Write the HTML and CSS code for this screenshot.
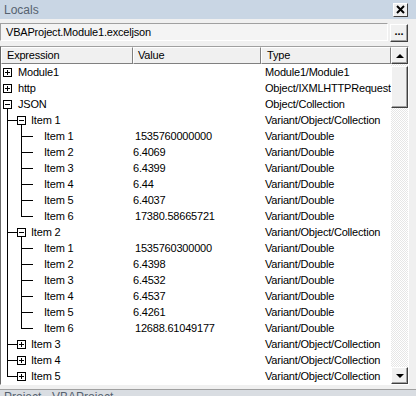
FILE: index.html
```html
<!DOCTYPE html>
<html>
<head>
    <meta charset="UTF-8">
    <title>Locals</title>
    <link rel="stylesheet" href="styles.css">
</head>
<body>
    <div class="window">
        <div class="titlebar">
            <span class="title">Locals</span>
            <span class="close">
                <svg width="9" height="9" viewBox="0 0 9 9"><path d="M1 1L8 8M8 1L1 8" stroke="#000" stroke-width="2"/></svg>
            </span>
        </div>

        <div class="context">
            <div class="combo">VBAProject.Module1.exceljson</div>
            <div class="btn dots">...</div>
        </div>

        <div class="listbox">
            <div class="grid">
                <div class="header">
                    <div class="hcell c-expr">Expression</div>
                    <div class="hcell c-val">Value</div>
                    <div class="hcell c-type">Type</div>
                </div>

                <!-- nivel 0 -->
                <div class="row">
                    <div class="c-expr"><span class="knot root"><span class="box plus"></span></span><span class="name root-name">Module1</span></div>
                    <div class="c-val"></div>
                    <div class="c-type">Module1/Module1</div>
                </div>
                <div class="row">
                    <div class="c-expr"><span class="knot root"><span class="box plus"></span></span><span class="name root-name">http</span></div>
                    <div class="c-val"></div>
                    <div class="c-type">Object/IXMLHTTPRequest</div>
                </div>
                <div class="row">
                    <div class="c-expr"><span class="knot root open"><span class="box minus"></span></span><span class="name root-name">JSON</span></div>
                    <div class="c-val"></div>
                    <div class="c-type">Object/Collection</div>
                </div>

                <!-- Item 1 -->
                <div class="row">
                    <div class="c-expr"><span class="ln-tee"></span><span class="knot open"><span class="box minus"></span></span><span class="name l1-name">Item 1</span></div>
                    <div class="c-val"></div>
                    <div class="c-type">Variant/Object/Collection</div>
                </div>
                <div class="row">
                    <div class="c-expr"><span class="ln-l2"></span><span class="name l2-name">Item 1</span></div>
                    <div class="c-val wide">1535760000000</div>
                    <div class="c-type">Variant/Double</div>
                </div>
                <div class="row">
                    <div class="c-expr"><span class="ln-l2"></span><span class="name l2-name">Item 2</span></div>
                    <div class="c-val">6.4069</div>
                    <div class="c-type">Variant/Double</div>
                </div>
                <div class="row">
                    <div class="c-expr"><span class="ln-l2"></span><span class="name l2-name">Item 3</span></div>
                    <div class="c-val">6.4399</div>
                    <div class="c-type">Variant/Double</div>
                </div>
                <div class="row">
                    <div class="c-expr"><span class="ln-l2"></span><span class="name l2-name">Item 4</span></div>
                    <div class="c-val">6.44</div>
                    <div class="c-type">Variant/Double</div>
                </div>
                <div class="row">
                    <div class="c-expr"><span class="ln-l2"></span><span class="name l2-name">Item 5</span></div>
                    <div class="c-val">6.4037</div>
                    <div class="c-type">Variant/Double</div>
                </div>
                <div class="row">
                    <div class="c-expr"><span class="ln-l2 last"></span><span class="name l2-name">Item 6</span></div>
                    <div class="c-val wide">17380.58665721</div>
                    <div class="c-type">Variant/Double</div>
                </div>

                <!-- Item 2 -->
                <div class="row">
                    <div class="c-expr"><span class="ln-tee"></span><span class="knot open"><span class="box minus"></span></span><span class="name l1-name">Item 2</span></div>
                    <div class="c-val"></div>
                    <div class="c-type">Variant/Object/Collection</div>
                </div>
                <div class="row">
                    <div class="c-expr"><span class="ln-l2"></span><span class="name l2-name">Item 1</span></div>
                    <div class="c-val wide">1535760300000</div>
                    <div class="c-type">Variant/Double</div>
                </div>
                <div class="row">
                    <div class="c-expr"><span class="ln-l2"></span><span class="name l2-name">Item 2</span></div>
                    <div class="c-val">6.4398</div>
                    <div class="c-type">Variant/Double</div>
                </div>
                <div class="row">
                    <div class="c-expr"><span class="ln-l2"></span><span class="name l2-name">Item 3</span></div>
                    <div class="c-val">6.4532</div>
                    <div class="c-type">Variant/Double</div>
                </div>
                <div class="row">
                    <div class="c-expr"><span class="ln-l2"></span><span class="name l2-name">Item 4</span></div>
                    <div class="c-val">6.4537</div>
                    <div class="c-type">Variant/Double</div>
                </div>
                <div class="row">
                    <div class="c-expr"><span class="ln-l2"></span><span class="name l2-name">Item 5</span></div>
                    <div class="c-val">6.4261</div>
                    <div class="c-type">Variant/Double</div>
                </div>
                <div class="row">
                    <div class="c-expr"><span class="ln-l2 last"></span><span class="name l2-name">Item 6</span></div>
                    <div class="c-val wide">12688.61049177</div>
                    <div class="c-type">Variant/Double</div>
                </div>

                <!-- Item 3..5 cerrados -->
                <div class="row">
                    <div class="c-expr"><span class="ln-tee"></span><span class="knot"><span class="box plus"></span></span><span class="name l1-name">Item 3</span></div>
                    <div class="c-val"></div>
                    <div class="c-type">Variant/Object/Collection</div>
                </div>
                <div class="row">
                    <div class="c-expr"><span class="ln-tee"></span><span class="knot"><span class="box plus"></span></span><span class="name l1-name">Item 4</span></div>
                    <div class="c-val"></div>
                    <div class="c-type">Variant/Object/Collection</div>
                </div>
                <div class="row">
                    <div class="c-expr"><span class="ln-tee"></span><span class="knot"><span class="box plus"></span></span><span class="name l1-name">Item 5</span></div>
                    <div class="c-val"></div>
                    <div class="c-type">Variant/Object/Collection</div>
                </div>
            </div>

            <div class="vscroll">
                <div class="btn arrow"><span class="tri up"></span></div>
                <div class="gap"></div>
                <div class="btn thumb"></div>
                <div class="track"></div>
                <div class="btn arrow"><span class="tri down"></span></div>
            </div>
        </div>

        <div class="next-panel">
            <span class="next-title">Project - VBAProject</span>
        </div>
    </div>
</body>
</html>
```

FILE: styles.css
```css
body {
    margin: 0;
    padding: 0;
    font-family: "Liberation Sans", Arial, sans-serif;
    font-size: 11px;
    letter-spacing: -0.2px;
    color: #000;
    background-color: #f0f0f0;
}

.window {
    width: 416px;
    height: 396px;
    overflow: hidden;
    background-color: #f0f0f0;
    display: flex;
    flex-direction: column;
}

/* Barra de titulo */
.titlebar {
    height: 19px;
    background-color: #c9d6e4;
    display: flex;
    align-items: center;
    justify-content: space-between;
    padding: 0 8px 0 4px;
    flex-shrink: 0;
}

.title {
    font-size: 12px;
    letter-spacing: 0;
    color: #56626f;
}

.close {
    width: 15px;
    height: 14px;
    box-sizing: border-box;
    background-color: #f0f0f0;
    border: 1px solid;
    border-color: #fff #404040 #404040 #fff;
    display: flex;
    align-items: center;
    justify-content: center;
}

.close svg {
    display: block;
}

/* Combo de contexto */
.context {
    display: flex;
    align-items: flex-start;
    margin-top: 4px;
    height: 19px;
    flex-shrink: 0;
}

.combo {
    width: 388px;
    height: 18px;
    box-sizing: border-box;
    border: 1px solid;
    border-color: #a0a0a0 #fff #fff #a0a0a0;
    background-color: #f4f4f4;
    padding: 0 5px;
    line-height: 16px;
    font-size: 11px;
}

.btn {
    box-sizing: border-box;
    background-color: #f0f0f0;
    border: 1px solid;
    border-color: #fff #404040 #404040 #fff;
    box-shadow: inset -1px -1px 0 #a0a0a0;
}

.dots {
    width: 18px;
    height: 18px;
    margin-left: 2px;
    margin-top: 1px;
    text-align: center;
    line-height: 12px;
    font-weight: bold;
    letter-spacing: 0;
}

/* Lista */
.listbox {
    margin-top: 4px;
    width: 409px;
    height: 339px;
    box-sizing: border-box;
    border: 1px solid;
    border-color: #a0a0a0 #fff #fff #696969;
    background-color: #fff;
    display: flex;
    flex-shrink: 0;
}

.grid {
    flex: 1;
    overflow: hidden;
}

.header {
    display: flex;
    height: 17px;
    box-sizing: border-box;
    background-color: #f0f0f0;
}

.hcell {
    box-sizing: border-box;
    height: 17px;
    line-height: 15px;
    border: 1px solid;
    border-color: #fff #808080 #808080 #fff;
    padding-left: 5px;
}

.row {
    display: flex;
    height: 16px;
    line-height: 16px;
    white-space: nowrap;
}

.c-expr {
    width: 132px;
    display: flex;
    align-items: center;
    flex-shrink: 0;
}

.c-val {
    width: 128px;
    flex-shrink: 0;
    padding-left: 0;
    box-sizing: border-box;
}

.row .c-val {
    padding-left: 0;
}

.row .c-val.wide {
    padding-left: 2px;
}

.c-type {
    flex: 1;
}

.row .c-type {
    padding-left: 4px;
}

.hcell.c-val {
    padding-left: 4px;
}

.hcell.c-type {
    padding-left: 5px;
}

/* Arbol */
.knot {
    width: 9px;
    height: 16px;
    display: flex;
    align-items: center;
    flex-shrink: 0;
}

.knot.root {
    margin-left: 2px;
}

.knot.open {
    background: linear-gradient(#000, #000) 4px 12px / 1px 4px no-repeat;
}

.box {
    width: 9px;
    height: 9px;
    box-sizing: border-box;
    border: 1px solid #000;
}

.box.plus {
    background:
        linear-gradient(#000, #000) center / 5px 1px no-repeat,
        linear-gradient(#000, #000) center / 1px 5px no-repeat,
        #fff;
}

.box.minus {
    background:
        linear-gradient(#000, #000) center / 5px 1px no-repeat,
        #fff;
}

.ln-tee {
    width: 16px;
    height: 16px;
    flex-shrink: 0;
    background:
        linear-gradient(#000, #000) 6px 0 / 1px 16px no-repeat,
        linear-gradient(#000, #000) 6px 8px / 10px 1px no-repeat;
}

.row:last-child .ln-tee {
    background:
        linear-gradient(#000, #000) 6px 0 / 1px 9px no-repeat,
        linear-gradient(#000, #000) 6px 8px / 10px 1px no-repeat;
}

.ln-l2 {
    width: 33px;
    height: 16px;
    flex-shrink: 0;
    background:
        linear-gradient(#000, #000) 6px 0 / 1px 16px no-repeat,
        linear-gradient(#000, #000) 20px 0 / 1px 16px no-repeat,
        linear-gradient(#000, #000) 20px 8px / 12px 1px no-repeat;
}

.ln-l2.last {
    background:
        linear-gradient(#000, #000) 6px 0 / 1px 16px no-repeat,
        linear-gradient(#000, #000) 20px 0 / 1px 9px no-repeat,
        linear-gradient(#000, #000) 20px 8px / 12px 1px no-repeat;
}

.root-name {
    margin-left: 6px;
}

.l1-name {
    margin-left: 5px;
}

.l2-name {
    margin-left: 10px;
}

/* Barra de desplazamiento */
.vscroll {
    width: 17px;
    display: flex;
    flex-direction: column;
    background: repeating-conic-gradient(#fff 0 25%, #e6e6e6 0 50%) 0 0 / 2px 2px;
}

.arrow {
    height: 17px;
    display: flex;
    align-items: center;
    justify-content: center;
    flex-shrink: 0;
}

.gap {
    height: 2px;
}

.thumb {
    height: 42px;
    flex-shrink: 0;
}

.track {
    flex: 1;
}

.tri {
    width: 0;
    height: 0;
    border-left: 4px solid transparent;
    border-right: 4px solid transparent;
}

.tri.up {
    border-bottom: 4px solid #000;
}

.tri.down {
    border-top: 4px solid #000;
}

/* Panel siguiente */
.next-panel {
    margin-top: 4px;
    border-top: 1px solid #a0a0a0;
    background-color: #d9dde2;
    flex: 1;
    overflow: hidden;
    padding-left: 4px;
}

.next-title {
    display: block;
    font-size: 12px;
    line-height: 14px;
    letter-spacing: 0;
    color: #56626f;
}
```
